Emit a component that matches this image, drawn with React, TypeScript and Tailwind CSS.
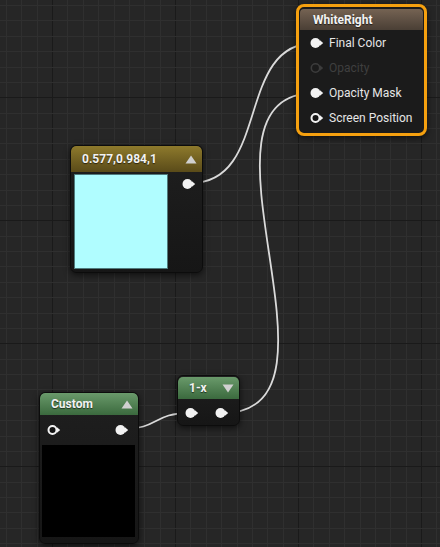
import React from "react";

type PinKind = "filled" | "ring" | "dim";

// pin glyph: circle + little arrow, circle centre sits at x=5.5
function Pin({ kind }: { kind: PinKind }) {
  const c = kind === "dim" ? "#3c3c3c" : "#f2f2f2";
  return (
    <svg width="14" height="12" viewBox="0 0 14 12" className="shrink-0">
      {kind === "filled" && <circle cx="5.5" cy="6" r="5" fill={c} />}
      {kind === "ring" && <circle cx="5.5" cy="6" r="4" fill="#141414" stroke={c} strokeWidth="2" />}
      {kind === "dim" && <circle cx="5.5" cy="6" r="4.2" fill="none" stroke={c} strokeWidth="1.6" />}
      <path d="M10 3.2 L13.2 6 L10 8.8 Z" fill={c} />
    </svg>
  );
}

function Tri({ down = false }: { down?: boolean }) {
  return (
    <svg width="12" height="9" viewBox="0 0 12 9">
      {down ? (
        <path d="M0.5 0.5 L11.5 0.5 L6 8.5 Z" fill="#d0d0d0" />
      ) : (
        <path d="M0.5 8.5 L11.5 8.5 L6 0.5 Z" fill="#d0d0d0" />
      )}
    </svg>
  );
}

function Grid() {
  const step = 15.375;
  const xs: number[] = [];
  const ys: number[] = [];
  for (let i = -4; i < 30; i++) xs.push(52 + i * step);
  for (let i = -1; i < 37; i++) ys.push(5 + i * step);
  return (
    <svg className="absolute inset-0" width="440" height="547">
      {xs.map((x, i) => (
        <line
          key={"x" + i}
          x1={Math.round(x) + 0.5}
          x2={Math.round(x) + 0.5}
          y1="0"
          y2="547"
          stroke={(i + 4) % 8 === 0 ? "#1a1a1a" : "#2f2f2f"}
          strokeWidth="1"
        />
      ))}
      {ys.map((y, i) => (
        <line
          key={"y" + i}
          y1={Math.round(y) + 0.5}
          y2={Math.round(y) + 0.5}
          x1="0"
          x2="440"
          stroke={(i + 1) % 8 === 0 ? "#1a1a1a" : "#2f2f2f"}
          strokeWidth="1"
        />
      ))}
    </svg>
  );
}

const title = "text-[12px] font-bold text-[#f2f2f2] [text-shadow:0_1px_1px_rgba(0,0,0,0.6)]";

export default function App() {
  return (
    <div
      className="relative w-[440px] h-[547px] overflow-hidden bg-[#262626]"
      style={{ fontFamily: "Roboto, 'Noto Sans', sans-serif" }}
    >
      <Grid />

      {/* wires */}
      <svg className="absolute inset-0" width="440" height="547">
        <g fill="none" stroke="#dadada" strokeWidth="1.8">
          <path d="M191 183 C271 183, 235 43, 315 43" />
          <path d="M223 413 C363 413, 175 93, 315 93" />
          <path d="M122 429 C160 429, 152 413, 190 413" />
        </g>
      </svg>

      {/* WhiteRight result node (selected) */}
      <div className="absolute left-[296px] top-[4px] w-[131px] h-[132px] rounded-[8px] border-[3px] border-[#f5a00f] bg-[#1b1b1b] overflow-hidden shadow-[0_2px_6px_rgba(0,0,0,0.6)]">
        <div className="mx-[1px] mt-[2px] h-[21px] rounded-t-[4px] bg-gradient-to-b from-[#756353] to-[#4a3f35] flex items-center pl-[13px]">
          <span className={title}>WhiteRight</span>
        </div>
        <div className="flex flex-col text-[12px] text-[#e6e6e6]">
          {[
            { label: "Final Color", kind: "filled" as PinKind },
            { label: "Opacity", kind: "dim" as PinKind },
            { label: "Opacity Mask", kind: "filled" as PinKind },
            { label: "Screen Position", kind: "ring" as PinKind },
          ].map((r) => (
            <div key={r.label} className="h-[25px] flex items-center pl-[11px] gap-[5px]">
              <Pin kind={r.kind} />
              <span className={r.kind === "dim" ? "text-[#3f3f3f]" : ""}>{r.label}</span>
            </div>
          ))}
        </div>
      </div>

      {/* constant3vector node */}
      <div className="absolute left-[70px] top-[145px] w-[133px] h-[128px] rounded-[6px] border border-[#0c0c0c] bg-gradient-to-b from-[#1f1f1f] to-[#161616] overflow-hidden shadow-[0_2px_6px_rgba(0,0,0,0.6)]">
        <div className="h-[26px] rounded-t-[5px] bg-gradient-to-b from-[#8e7a2c] to-[#5a4b19] flex items-center justify-between pl-[11px] pr-[5px]">
          <span className={title}>0.577,0.984,1</span>
          <Tri />
        </div>
        <div className="flex items-start pt-[2px] pl-[3px]">
          <div className="w-[94px] h-[95px] bg-[#b0fdff] border border-[#4f7b7d]" />
          <div className="ml-[14px] mt-[4px]">
            <Pin kind="filled" />
          </div>
        </div>
      </div>

      {/* Custom node */}
      <div className="absolute left-[39px] top-[392px] w-[100px] h-[152px] rounded-[6px] border border-[#0c0c0c] bg-gradient-to-b from-[#1f1f1f] to-[#161616] overflow-hidden shadow-[0_2px_6px_rgba(0,0,0,0.6)]">
        <div className="h-[22px] rounded-t-[5px] bg-gradient-to-b from-[#6a9a6b] to-[#3b6a3e] flex items-center justify-between pl-[11px] pr-[5px]">
          <span className={title}>Custom</span>
          <Tri />
        </div>
        <div className="h-[30px] flex items-center justify-between pl-[7px] pr-[9px]">
          <Pin kind="ring" />
          <Pin kind="filled" />
        </div>
        <div className="ml-[2px] w-[93px] h-[92px] bg-black" />
      </div>

      {/* OneMinus node */}
      <div className="absolute left-[177px] top-[375px] w-[63px] h-[51px] rounded-[6px] border border-[#0c0c0c] bg-gradient-to-b from-[#1f1f1f] to-[#161616] overflow-hidden shadow-[0_2px_6px_rgba(0,0,0,0.6)]">
        <div className="mt-[1px] h-[22px] rounded-t-[5px] bg-gradient-to-b from-[#6a9a6b] to-[#3b6a3e] flex items-center justify-between pl-[11px] pr-[5px]">
          <span className={title}>1-x</span>
          <Tri down />
        </div>
        <div className="h-[28px] flex items-center justify-between pl-[7px] pr-[10px]">
          <Pin kind="filled" />
          <Pin kind="filled" />
        </div>
      </div>
    </div>
  );
}
